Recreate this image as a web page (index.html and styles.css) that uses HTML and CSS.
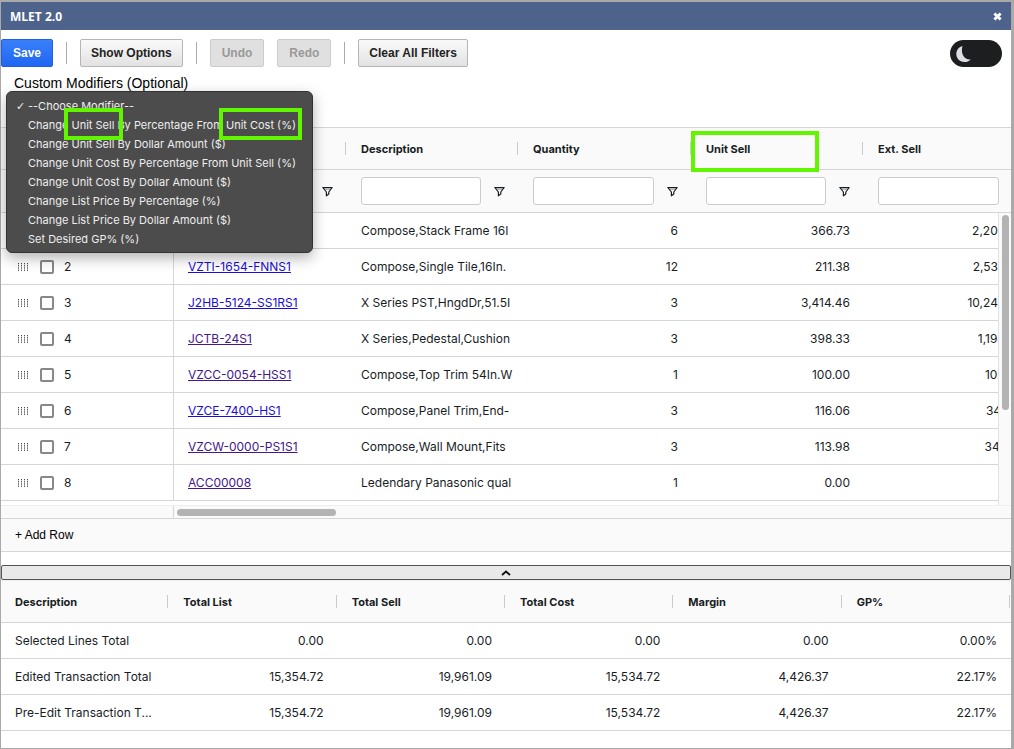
FILE: index.html
```
<!DOCTYPE html>
<html lang="en">

<head>
  <meta charset="utf-8">
  <title>MLET 2.0</title>
  <link rel="stylesheet" href="styles.css">
</head>

<body>
  <svg class="sprite" aria-hidden="true">
    <symbol id="funnel" viewBox="0 0 11 11">
      <path d="M.8 1.500h9.400L6.800 6v2L4.400 9.800V6z" fill="none" stroke="#181d1f" stroke-width="1.200" stroke-linejoin="round"/>
      <path d="M2 3h7" stroke="#181d1f" stroke-width=".6"/>
    </symbol>
    <symbol id="grip" viewBox="0 0 10 8">
      <path d="M.5 0v8M3.5 0v8M6.5 0v8M9.5 0v8" stroke="#444" stroke-dasharray="1.3 .9"/>
    </symbol>
  </svg>

  <div class="dialog">
    <header class="titlebar">
      <span>MLET 2.0</span>
      <button class="close" aria-label="Close">
        <svg width="9" height="9" viewBox="0 0 9 9"><path d="M1.4 1.4l6.2 6.2M7.6 1.4L1.4 7.6" stroke="#fff" stroke-width="2.8"/></svg>
      </button>
    </header>

    <div class="toolbar">
      <button class="btn primary">Save</button>
      <span class="divider"></span>
      <button class="btn">Show Options</button>
      <span class="divider"></span>
      <button class="btn" disabled>Undo</button>
      <button class="btn" disabled>Redo</button>
      <span class="divider"></span>
      <button class="btn">Clear All Filters</button>
      <label class="theme">
        <input type="checkbox" aria-label="Dark mode">
        <svg width="18" height="18" viewBox="0 0 18 18"><path d="M7.5 1C1.8 2.5-.2 8.800 2.500 13.300 5.200 17.800 12 18.500 16 14.200 10.500 15.500 5 10 7.500 1z" fill="#dcdee3"/></svg>
      </label>
    </div>

    <div class="modifiers">
      <label for="modifier">Custom Modifiers (Optional)</label>
      <div class="menu">
        <select id="modifier" size="8">
          <option selected>--Choose Modifier--</option>
          <option>Change Unit Sell By Percentage From Unit Cost (%)</option>
          <option>Change Unit Sell By Dollar Amount ($)</option>
          <option>Change Unit Cost By Percentage From Unit Sell (%)</option>
          <option>Change Unit Cost By Dollar Amount ($)</option>
          <option>Change List Price By Percentage (%)</option>
          <option>Change List Price By Dollar Amount ($)</option>
          <option>Set Desired GP% (%)</option>
        </select>
        <span class="mark mark-sell"></span>
        <span class="mark mark-cost"></span>
      </div>
    </div>

    <div class="grid">
      <table class="lines">
        <colgroup>
          <col class="wide"><col class="wide"><col><col class="wide"><col><col class="wide">
        </colgroup>
        <thead>
          <tr>
            <th></th>
            <th></th>
            <th>Description</th>
            <th>Quantity</th>
            <th>Unit Sell<span class="mark mark-column"></span></th>
            <th>Ext. Sell</th>
          </tr>
          <tr class="filters">
            <td></td>
            <td><div class="filter"><input type="text" aria-label="Filter item"><svg><use href="#funnel"/></svg></div></td>
            <td><div class="filter"><input type="text" aria-label="Filter description"><svg><use href="#funnel"/></svg></div></td>
            <td><div class="filter"><input type="text" aria-label="Filter quantity"><svg><use href="#funnel"/></svg></div></td>
            <td><div class="filter"><input type="text" aria-label="Filter unit sell"><svg><use href="#funnel"/></svg></div></td>
            <td><div class="filter"><input type="text" aria-label="Filter ext. sell"><svg><use href="#funnel"/></svg></div></td>
          </tr>
        </thead>
        <tbody>
          <tr>
            <td><label class="pick"><svg><use href="#grip"/></svg><input type="checkbox">1</label></td>
            <td></td>
            <td>Compose,Stack Frame 16I</td><td class="num">6</td><td class="num">366.73</td><td class="num">2,200.38</td>
          </tr>
          <tr>
            <td><label class="pick"><svg><use href="#grip"/></svg><input type="checkbox">2</label></td>
            <td><a href="#">VZTI-1654-FNNS1</a></td>
            <td>Compose,Single Tile,16In.</td><td class="num">12</td><td class="num">211.38</td><td class="num">2,536.56</td>
          </tr>
          <tr>
            <td><label class="pick"><svg><use href="#grip"/></svg><input type="checkbox">3</label></td>
            <td><a href="#">J2HB-5124-SS1RS1</a></td>
            <td>X Series PST,HngdDr,51.5I</td><td class="num">3</td><td class="num">3,414.46</td><td class="num">10,243.38</td>
          </tr>
          <tr>
            <td><label class="pick"><svg><use href="#grip"/></svg><input type="checkbox">4</label></td>
            <td><a class="seen" href="#">JCTB-24S1</a></td>
            <td>X Series,Pedestal,Cushion</td><td class="num">3</td><td class="num">398.33</td><td class="num">1,194.99</td>
          </tr>
          <tr>
            <td><label class="pick"><svg><use href="#grip"/></svg><input type="checkbox">5</label></td>
            <td><a class="seen" href="#">VZCC-0054-HSS1</a></td>
            <td>Compose,Top Trim 54In.W</td><td class="num">1</td><td class="num">100.00</td><td class="num">100.00</td>
          </tr>
          <tr>
            <td><label class="pick"><svg><use href="#grip"/></svg><input type="checkbox">6</label></td>
            <td><a href="#">VZCE-7400-HS1</a></td>
            <td>Compose,Panel Trim,End-</td><td class="num">3</td><td class="num">116.06</td><td class="num">348.18</td>
          </tr>
          <tr>
            <td><label class="pick"><svg><use href="#grip"/></svg><input type="checkbox">7</label></td>
            <td><a class="seen" href="#">VZCW-0000-PS1S1</a></td>
            <td>Compose,Wall Mount,Fits</td><td class="num">3</td><td class="num">113.98</td><td class="num">341.94</td>
          </tr>
          <tr>
            <td><label class="pick"><svg><use href="#grip"/></svg><input type="checkbox">8</label></td>
            <td><a class="seen" href="#">ACC00008</a></td>
            <td>Ledendary Panasonic qual</td><td class="num">1</td><td class="num">0.00</td><td></td>
          </tr>
        </tbody>
      </table>
      <div class="vscroll"><span></span></div>
      <div class="hscroll"><div class="pinned"></div><span></span></div>
    </div>
    <button class="add-row">+ Add Row</button>

    <button class="collapse" aria-label="Toggle totals">
      <svg width="10" height="6" viewBox="0 0 10 6"><path d="M1 5l4-3.500L9 5" fill="none" stroke="#111" stroke-width="1.800"/></svg>
    </button>

    <table class="totals">
      <thead>
        <tr><th>Description</th><th>Total List</th><th>Total Sell</th><th>Total Cost</th><th>Margin</th><th>GP%</th></tr>
      </thead>
      <tbody>
        <tr><td>Selected Lines Total</td><td class="num">0.00</td><td class="num">0.00</td><td class="num">0.00</td><td class="num">0.00</td><td class="num">0.00%</td></tr>
        <tr><td>Edited Transaction Total</td><td class="num">15,354.72</td><td class="num">19,961.09</td><td class="num">15,534.72</td><td class="num">4,426.37</td><td class="num">22.17%</td></tr>
        <tr><td>Pre-Edit Transaction T...</td><td class="num">15,354.72</td><td class="num">19,961.09</td><td class="num">15,534.72</td><td class="num">4,426.37</td><td class="num">22.17%</td></tr>
      </tbody>
    </table>
  </div>
</body>

</html>
```
FILE: styles.css
```
* {
  box-sizing: border-box;
}

body {
  margin: 0;
  padding: 2px 3px 1px 1px;
  min-height: 100vh;
  display: flex;
  background: #a9a9a9;
  color: #181d1f;
  font-family: Inter, sans-serif;
  font-size: 12px;
}

button,
input,
select {
  font: inherit;
}

.sprite {
  position: absolute;
  width: 0;
  height: 0;
}

.dialog {
  flex: 1;
  min-width: 0;
  background: #fff;
}

.titlebar {
  display: flex;
  justify-content: space-between;
  align-items: center;
  height: 28px;
  padding: 0 9px;
  background: #4e638b;
  color: #fff;
  font: bold 12px "Open Sans", sans-serif;
}

.close {
  display: flex;
  padding: 0;
  border: none;
  background: none;
}

.toolbar {
  display: flex;
  align-items: center;
  gap: 13px;
  padding: 9px 9px 0 0;
}

.btn {
  height: 28px;
  padding: 0 10px;
  border: 1px solid #b5b5b5;
  border-radius: 2px;
  background: linear-gradient(#fafafa, #e2e2e2);
  color: #222;
  font: bold 12px "Liberation Sans", sans-serif;
}

.btn.primary {
  padding: 0 11px;
  border-color: #2160d8;
  background: linear-gradient(#3a80fb, #1f66f2);
  color: #fff;
}

.btn:disabled {
  padding: 0 11px;
  border-color: #ccc;
  background: #e0e0e0;
  color: #999;
}

.divider {
  width: 1px;
  height: 22px;
  background: #aaa;
}

.theme {
  position: relative;
  margin-left: auto;
  display: flex;
}

.theme input {
  appearance: none;
  width: 52px;
  height: 27px;
  margin: 0;
  border-radius: 14px;
  background: #1d1e20;
}

.theme svg {
  position: absolute;
  left: 5px;
  top: 5px;
}

.modifiers {
  position: relative;
  height: 60px;
  padding: 7px 13px;
  color: #000;
  font: 14px/18px "Liberation Sans", sans-serif;
}

/* open list, drawn over the grid */
.menu {
  position: absolute;
  z-index: 2;
  left: 5px;
  top: 24px;
}

.menu select {
  display: block;
  width: 307px;
  height: 162px;
  padding: 7px 0 1px;
  overflow: hidden;
  border: 1px solid #333;
  border-radius: 6px;
  outline: none;
  background: #4c4c4c;
  box-shadow: 0 5px 14px rgba(0, 0, 0, 0.3);
  font: 11px/19px Inter, sans-serif;
}

.menu option {
  min-height: 19px;
  padding: 0 0 0 21px;
  color: #eee;
}

.menu option:checked {
  padding-left: 9px;
  background: #4c4c4c linear-gradient(#4c4c4c, #4c4c4c);
}

.menu option:checked::before {
  content: "✓";
  display: inline-block;
  width: 12px;
  font-family: "DejaVu Sans", sans-serif;
}

.mark {
  position: absolute;
  border: 4px solid #62f500;
}

.mark-sell {
  left: 58px;
  top: 17px;
  width: 59px;
  height: 32px;
}

.mark-cost {
  left: 213px;
  top: 17px;
  width: 83px;
  height: 32px;
}

.mark-column {
  left: -1px;
  top: 3px;
  width: 128px;
  height: 41px;
}

.grid {
  position: relative;
  overflow: hidden;
  border-top: 1px solid #d5d6d8;
}

table {
  width: 100%;
  table-layout: fixed;
  border-spacing: 0;
}

th,
td {
  height: 36px;
  padding: 0 14px;
  border-bottom: 1px solid #d5d6d8;
  text-align: left;
  white-space: nowrap;
}

th {
  position: relative;
  height: 42px;
  background: linear-gradient(#c9cbcd, #c9cbcd) right 1px center / 1px 13px no-repeat #fafafa;
  font-size: 11px;
  font-weight: bold;
}

.num {
  text-align: right;
}

.lines {
  width: 1036px;
  min-width: 100%;
}

.lines col {
  width: 172px;
}

.lines col.wide {
  width: 173px;
}

.lines td:first-child {
  border-right: 1px solid #d5d6d8;
}

.filters td {
  height: 43px;
  background: #fafafa;
}

.filter {
  display: flex;
  align-items: center;
  gap: 13px;
}

.filter input {
  flex: 1;
  min-width: 0;
  height: 28px;
  border: 1px solid #ccc;
  border-radius: 3px;
  background: #fff;
}

.filter svg {
  width: 11px;
  height: 11px;
}

.pick {
  display: flex;
  align-items: center;
  padding-left: 3px;
}

.pick svg {
  width: 10px;
  height: 8px;
  margin-right: 12px;
}

.pick input {
  appearance: none;
  width: 14px;
  height: 14px;
  margin: 0 10px 0 0;
  border: 2px solid #888;
  border-radius: 2px;
}

a {
  color: #1a0dd8;
}

a.seen {
  color: #44178a;
}

.vscroll {
  position: absolute;
  top: 85px;
  right: 0;
  bottom: 13px;
  width: 13px;
  padding: 2px 3px;
  border-left: 1px solid #e2e2e2;
  background: #fafafa;
}

.vscroll span {
  display: block;
  width: 7px;
  height: 195px;
  border-radius: 4px;
  background: #b3b3b3;
}

.hscroll {
  display: flex;
  align-items: center;
  height: 13px;
  margin-top: 4px;
  border-top: 1px solid #eee;
  background: #fafafa;
}

.pinned {
  width: 173px;
  height: 100%;
  border-right: 1px solid #d5d6d8;
}

.hscroll span {
  width: 159px;
  height: 7px;
  margin-left: 3px;
  border-radius: 4px;
  background: #b3b3b3;
}

.add-row {
  display: block;
  width: 100%;
  height: 34px;
  padding: 0 14px;
  border: solid #d5d6d8;
  border-width: 1px 0;
  background: #fafafa;
  color: #000;
  font: 12px "Liberation Sans", sans-serif;
  text-align: left;
}

.collapse {
  display: flex;
  justify-content: center;
  align-items: center;
  width: 100%;
  height: 15px;
  margin-top: 13px;
  border: 1px solid #555;
  border-radius: 2px;
  background: #e9e9e9;
}

.totals {
  border-top: 1px solid #eee;
}
```
